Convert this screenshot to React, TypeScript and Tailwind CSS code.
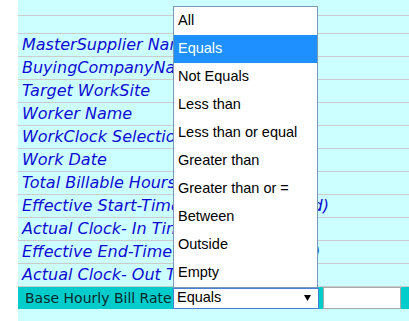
import React from 'react';

const labels = [
  'MasterSupplier Name',
  'BuyingCompanyName',
  'Target WorkSite',
  'Worker Name',
  'WorkClock Selection',
  'Work Date',
  'Total Billable Hours',
  'Effective Start-Time (Payroll Rounded)',
  'Actual Clock- In Time',
  'Effective End-Time (Payroll Rounded)',
  'Actual Clock- Out Time',
];

const options = [
  'All',
  'Equals',
  'Not Equals',
  'Less than',
  'Less than or equal',
  'Greater than',
  'Greater than or =',
  'Between',
  'Outside',
  'Empty',
];

export default function App() {
  return (
    <div className="relative flex w-[409px] h-[321px] overflow-hidden bg-white">
      <div className="w-[18px] shrink-0" />
      <div className="flex-1 flex flex-col bg-[#ccffff] overflow-hidden">
        <div className="h-[16px] shrink-0 border-b border-[#cccccc]" />
        <div className="h-[18px] shrink-0 border-b border-[#cccccc]" />
        {labels.map((l) => (
          <div
            key={l}
            className="h-[23px] shrink-0 flex items-center border-b border-[#cccccc] pl-[4px] whitespace-nowrap italic text-[16px] text-[#0c0cd4]"
            style={{ fontFamily: '"DejaVu Sans", sans-serif' }}
          >
            {l}
          </div>
        ))}
        <div className="h-[22px] shrink-0 flex items-center bg-[#00cccc]">
          <div
            className="w-[155px] shrink-0 pl-[7px] whitespace-nowrap text-[14px] text-[#0a2a2a]"
            style={{ fontFamily: '"DejaVu Sans", sans-serif' }}
          >
            Base Hourly Bill Rate
          </div>
          <div
            className="w-[146px] h-[21px] shrink-0 flex items-center justify-between bg-white border border-[#4a7fd6] pl-[3px] pr-[7px] text-[14.5px] text-black"
            style={{ fontFamily: '"Liberation Sans", Arial, sans-serif' }}
          >
            <span>Equals</span>
            <svg width="7" height="6" viewBox="0 0 7 6">
              <path d="M0 0 H7 L3.5 6 Z" fill="#000" />
            </svg>
          </div>
          <div className="ml-[4px] w-[78px] h-[22px] shrink-0 bg-white border border-[#aaaaaa]" />
        </div>
      </div>
      <div
        className="absolute left-[173px] top-[6px] w-[145px] flex flex-col bg-white border border-[#7a98b8] text-[14.5px] text-black"
        style={{ fontFamily: '"Liberation Sans", Arial, sans-serif' }}
      >
        {options.map((o, i) => (
          <div
            key={o}
            className={
              'h-[28px] flex items-center pl-[4px] whitespace-nowrap ' +
              (i === 1 ? 'bg-[#1e90ff] text-white' : '')
            }
          >
            {o}
          </div>
        ))}
      </div>
    </div>
  );
}
